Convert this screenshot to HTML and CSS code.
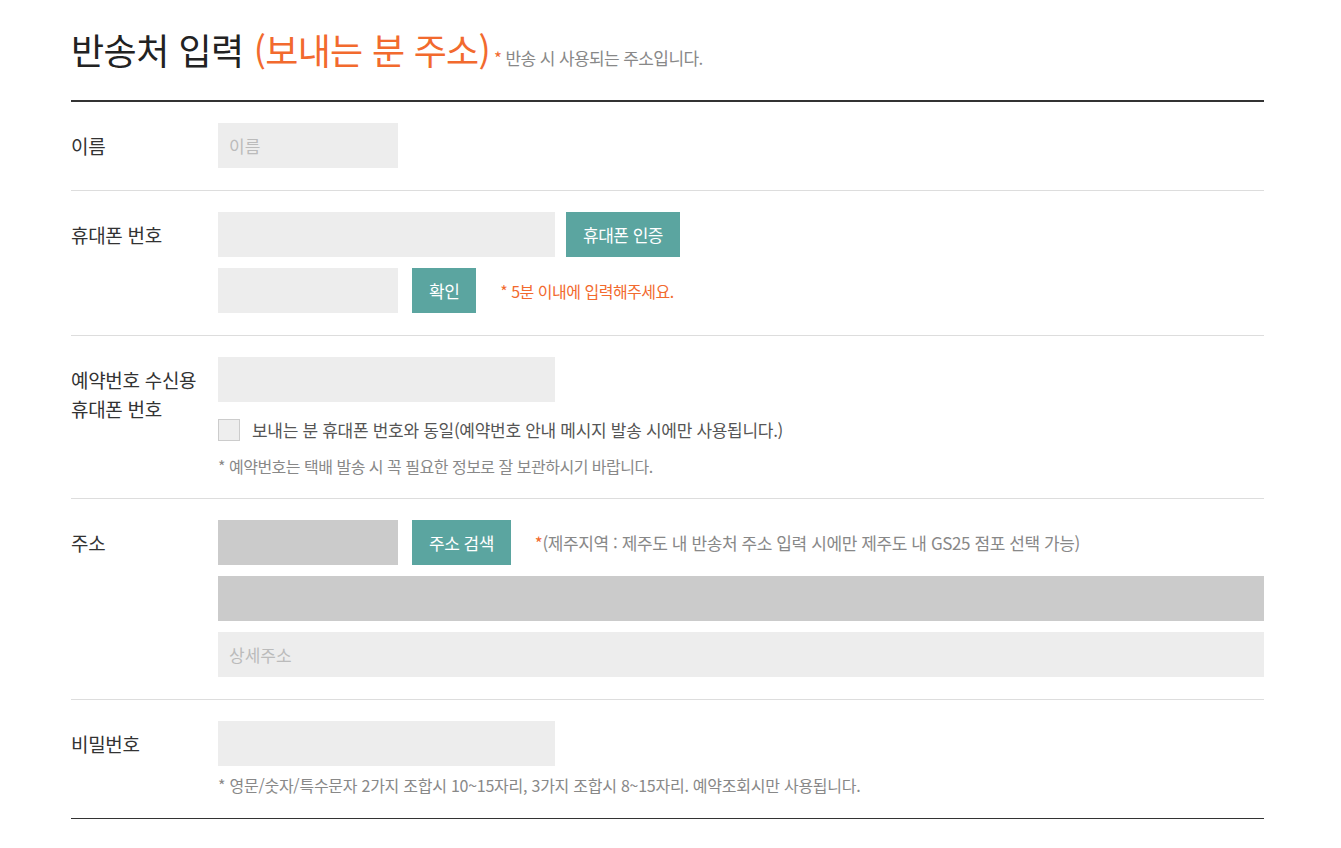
FILE: index.html
```html
<!DOCTYPE html>
<html lang="ko">
<head>
    <meta charset="UTF-8">
    <meta name="viewport" content="width=device-width, initial-scale=1.0">
    <title>반송처 입력</title>
    <link rel="stylesheet" href="styles.css">
</head>
<body>
    <div class="return-form">
        <h2 class="form-title">
            <span class="title-main">반송처 입력</span>
            <span class="title-sub">(보내는 분 주소)</span><span class="title-desc"><em>*</em> 반송 시 사용되는 주소입니다.</span>
        </h2>

        <div class="form-row">
            <div class="form-label">이름</div>
            <div class="form-field">
                <div class="line">
                    <input type="text" class="inp inp-short" placeholder="이름">
                </div>
            </div>
        </div>

        <div class="form-row">
            <div class="form-label">휴대폰 번호</div>
            <div class="form-field">
                <div class="line line-tight">
                    <input type="text" class="inp inp-mid">
                    <button class="btn">휴대폰 인증</button>
                </div>
                <div class="line">
                    <input type="text" class="inp inp-short">
                    <button class="btn">확인</button>
                    <span class="msg msg-alert">* 5분 이내에 입력해주세요.</span>
                </div>
            </div>
        </div>

        <div class="form-row">
            <div class="form-label">예약번호 수신용<br>휴대폰 번호</div>
            <div class="form-field">
                <div class="line">
                    <input type="text" class="inp inp-mid">
                </div>
                <label class="check">
                    <span class="check-box"></span>
                    <span>보내는 분 휴대폰 번호와 동일(예약번호 안내 메시지 발송 시에만 사용됩니다.)</span>
                </label>
                <p class="note">* 예약번호는 택배 발송 시 꼭 필요한 정보로 잘 보관하시기 바랍니다.</p>
            </div>
        </div>

        <div class="form-row">
            <div class="form-label">주소</div>
            <div class="form-field">
                <div class="line">
                    <input type="text" class="inp inp-short inp-disabled">
                    <button class="btn">주소 검색</button>
                    <span class="msg"><em>*</em>(제주지역 : 제주도 내 반송처 주소 입력 시에만 제주도 내 GS25 점포 선택 가능)</span>
                </div>
                <div class="line">
                    <input type="text" class="inp inp-full inp-disabled">
                </div>
                <div class="line">
                    <input type="text" class="inp inp-full" placeholder="상세주소">
                </div>
            </div>
        </div>

        <div class="form-row form-row-last">
            <div class="form-label">비밀번호</div>
            <div class="form-field">
                <div class="line">
                    <input type="password" class="inp inp-mid">
                </div>
                <p class="note note-pw">* 영문/숫자/특수문자 2가지 조합시 10~15자리, 3가지 조합시 8~15자리. 예약조회시만 사용됩니다.</p>
            </div>
        </div>
    </div>
</body>
</html>
```

FILE: styles.css
```css
* {
    margin: 0;
    padding: 0;
    box-sizing: border-box;
}
body {
    font-family: "Noto Sans CJK KR", "Noto Sans", sans-serif;
    color: #333;
    background: #fff;
}
em {
    font-style: normal;
    color: #f26a2e;
}
.return-form {
    width: 1193px;
    margin-left: 71px;
}
.form-title {
    font-size: 36px;
    font-weight: 400;
    line-height: 48px;
    padding-top: 25px;
    padding-bottom: 18px;
    border-bottom: 2px solid #333;
    color: #222;
    white-space: nowrap;
}
.title-main {
    letter-spacing: -0.5px;
}
.title-sub {
    color: #f26a2e;
    letter-spacing: -0.7px;
}
.title-desc {
    font-size: 17px;
    color: #888;
    letter-spacing: -0.6px;
    margin-left: 4px;
}
.form-row {
    display: flex;
    padding: 21px 0 22px;
    border-bottom: 1px solid #ddd;
}
.form-row-last {
    padding-bottom: 23px;
    border-bottom: 1px solid #333;
}
.form-label {
    width: 147px;
    flex-shrink: 0;
    font-size: 19px;
    line-height: 29px;
    padding-top: 8px;
    letter-spacing: -0.3px;
}
.form-field {
    flex: 1;
    display: flex;
    flex-direction: column;
    gap: 11px;
}
.line {
    display: flex;
    align-items: center;
    gap: 14px;
}
.line-tight {
    gap: 11px;
}
.inp {
    height: 45px;
    border: 0;
    background: #ededed;
    padding: 0 11px;
    font-family: inherit;
    font-size: 17px;
    color: #333;
    outline: none;
}
.inp::placeholder {
    color: #bbb;
}
.inp-short {
    width: 180px;
}
.inp-mid {
    width: 337px;
}
.inp-full {
    width: 100%;
}
.inp-disabled {
    background: #cbcbcb;
}
.btn {
    height: 45px;
    border: 0;
    background: #5ba5a0;
    color: #fff;
    font-family: inherit;
    font-size: 17px;
    padding: 0 17px;
    letter-spacing: -0.5px;
    cursor: pointer;
}
.msg {
    margin-left: 10px;
    font-size: 17px;
    color: #888;
    letter-spacing: -0.4px;
}
.msg-alert {
    font-size: 16px;
    letter-spacing: -0.5px;
    color: #f26a2e;
}
.check {
    display: flex;
    align-items: center;
    gap: 12px;
    margin-top: 6px;
    font-size: 17px;
    line-height: 22px;
    color: #555;
    letter-spacing: -0.3px;
}
.check-box {
    width: 22px;
    height: 22px;
    background: #eee;
    border: 1px solid #ccc;
}
.note {
    font-size: 16px;
    line-height: 20px;
    color: #888;
    letter-spacing: -0.5px;
    margin-top: 4px;
}
.note-pw {
    margin-top: -2px;
    letter-spacing: -0.25px;
}
```
